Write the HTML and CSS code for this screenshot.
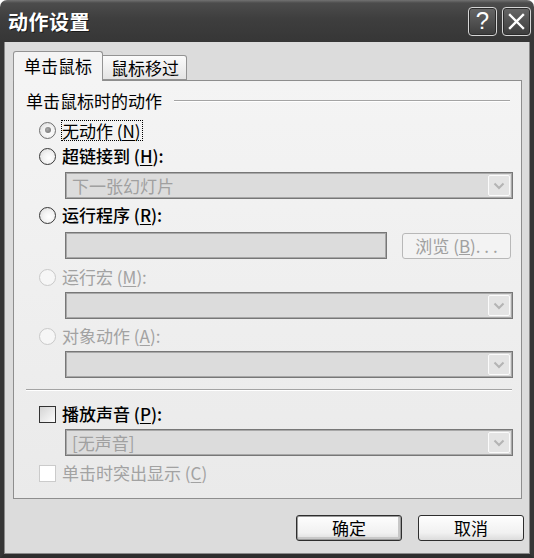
FILE: index.html
```html
<!DOCTYPE html>
<html lang="zh-CN">
<head>
<meta charset="utf-8">
<title>动作设置</title>
<link rel="stylesheet" href="styles.css">
</head>
<body>
<div class="window">
  <div class="titlebar">
    <span class="title">动作设置</span>
    <div class="tb-buttons">
      <span class="tb-btn tb-help">?</span>
      <span class="tb-btn"><svg width="17" height="17" viewBox="0 0 17 17"><path d="M2 2 L15 15 M15 2 L2 15" stroke="#fff" stroke-width="2.4" stroke-linecap="square"/></svg></span>
    </div>
  </div>
  <div class="client">
    <div class="tabs">
      <div class="tab active">单击鼠标</div>
      <div class="tab">鼠标移过</div>
    </div>
    <div class="panel">
      <div class="group-head"><span>单击鼠标时的动作</span><span class="rule"></span></div>

      <div class="opt r1"><span class="radio checked"></span><span class="lbl focus">无动作 (<u>N</u>)</span></div>
      <div class="opt r2"><span class="radio"></span><span class="lbl">超链接到 (<u>H</u>):</span></div>
      <div class="combo c1"><span class="combo-text">下一张幻灯片</span><span class="combo-btn"><svg width="12" height="8" viewBox="0 0 12 8"><path d="M1.5 1.5 L6 6 L10.5 1.5" fill="none" stroke="#b4b4b4" stroke-width="2"/></svg></span></div>

      <div class="opt r3"><span class="radio"></span><span class="lbl">运行程序 (<u>R</u>):</span></div>
      <div class="prog-row">
        <div class="textbox"></div>
        <div class="browse">浏览 (<u>B</u>). . .</div>
      </div>

      <div class="opt r4 disabled"><span class="radio"></span><span class="lbl">运行宏 (<u>M</u>):</span></div>
      <div class="combo c2"><span class="combo-text"></span><span class="combo-btn"><svg width="12" height="8" viewBox="0 0 12 8"><path d="M1.5 1.5 L6 6 L10.5 1.5" fill="none" stroke="#b4b4b4" stroke-width="2"/></svg></span></div>

      <div class="opt r5 disabled"><span class="radio"></span><span class="lbl">对象动作 (<u>A</u>):</span></div>
      <div class="combo c3"><span class="combo-text"></span><span class="combo-btn"><svg width="12" height="8" viewBox="0 0 12 8"><path d="M1.5 1.5 L6 6 L10.5 1.5" fill="none" stroke="#b4b4b4" stroke-width="2"/></svg></span></div>

      <div class="separator"></div>

      <div class="opt k1"><span class="check"></span><span class="lbl">播放声音 (<u>P</u>):</span></div>
      <div class="combo c4"><span class="combo-text">[无声音]</span><span class="combo-btn"><svg width="12" height="8" viewBox="0 0 12 8"><path d="M1.5 1.5 L6 6 L10.5 1.5" fill="none" stroke="#b4b4b4" stroke-width="2"/></svg></span></div>
      <div class="opt k2 disabled"><span class="check"></span><span class="lbl">单击时突出显示 (<u>C</u>)</span></div>
    </div>
    <div class="actions">
      <button class="btn default">确定</button>
      <button class="btn">取消</button>
    </div>
  </div>
</div>
</body>
</html>
```
FILE: styles.css
```css
html, body {
  margin: 0;
  padding: 0;
  background: #ffffff;
}
body {
  font-family: "Noto Sans CJK SC", "Noto Sans", sans-serif;
  font-size: 17px;
  color: #000;
}
.window {
  width: 534px;
  height: 558px;
  display: flex;
  flex-direction: column;
}
.titlebar {
  height: 42px;
  flex: none;
  box-sizing: border-box;
  display: flex;
  align-items: center;
  justify-content: space-between;
  padding: 0 3px 0 8px;
  border-radius: 7px 7px 0 0;
  background: linear-gradient(#727272 0, #4c4c4c 3px, #3e3e3e 45%, #363636 100%);
}
.title {
  color: #fff;
  font-weight: bold;
  font-size: 20px;
  letter-spacing: 0.5px;
  text-shadow: 1px 1px 0 #1a1a1a;
}
.tb-buttons {
  display: flex;
  gap: 5px;
}
.tb-btn {
  width: 29px;
  height: 29px;
  box-sizing: border-box;
  border: 1px solid #d6d6d6;
  border-radius: 4px;
  background: linear-gradient(#676767, #3d3d3d);
  box-shadow: inset 0 0 0 1px #2c2c2c;
  display: flex;
  align-items: center;
  justify-content: center;
  color: #fff;
}
.tb-help {
  font-family: "Liberation Sans", sans-serif;
  font-size: 24px;
  line-height: 1;
}
.client {
  flex: 1;
  background: #dcdcdc;
  border-left: 4px solid #363636;
  border-right: 4px solid #363636;
  border-bottom: 4px solid #2e2e2e;
  box-shadow: inset 1px 0 0 #8a8a8a, inset -1px 0 0 #8a8a8a, inset 0 -1px 0 #8a8a8a;
  padding: 9px 6px 0 9px;
  display: flex;
  flex-direction: column;
}
.tabs {
  display: flex;
  align-items: flex-end;
  height: 30px;
  position: relative;
  z-index: 2;
}
.tab {
  box-sizing: border-box;
  height: 25px;
  margin-bottom: 1px;
  padding: 0 7px 0 8px;
  border: 1px solid #939393;
  border-left: none;
  border-radius: 0 3px 0 0;
  background: linear-gradient(#fbfbfb, #e4e4e4);
  line-height: 23px;
}
.tab.active {
  height: 30px;
  margin-bottom: 0;
  padding: 0 10px;
  border-left: 1px solid #939393;
  border-bottom: none;
  border-radius: 3px 3px 0 0;
  background: #f4f4f4;
  line-height: 28px;
}
.panel {
  margin-top: -1px;
  margin-right: 2px;
  border: 1px solid #8e8e8e;
  background: linear-gradient(#f4f4f4, #eaeaea);
  padding: 0 0 14px 0;
  display: flex;
  flex-direction: column;
}
.group-head {
  display: flex;
  align-items: center;
  margin: 11px 11px 0 12px;
  height: 18px;
  line-height: 18px;
}
.group-head .rule {
  flex: 1;
  margin-left: 12px;
  border-top: 1px solid #a4a4a4;
  border-bottom: 1px solid #ffffff;
}
.opt {
  display: flex;
  align-items: center;
  height: 22px;
  margin-left: 25px;
  line-height: 22px;
}
.opt .lbl {
  margin-left: 6px;
  font-weight: 500;
}
.opt.disabled .lbl {
  color: #a2a2a2;
  font-weight: 400;
}
.opt u {
  text-decoration-thickness: 1px;
  text-underline-offset: 2px;
}
.lbl.focus {
  outline: 1px dotted #000;
  outline-offset: -1px;
  padding: 0 2px 0 1px;
  margin-left: 5px;
  line-height: 21px;
  font-weight: 400;
}
.radio {
  width: 17px;
  height: 17px;
  box-sizing: border-box;
  border-radius: 50%;
  border: 1.5px solid #383838;
  background: radial-gradient(circle at 60% 60%, #ffffff 0, #f2f2f2 45%, #d6d6d6 100%);
  position: relative;
  flex: none;
}
.radio.checked {
  border: 1px solid #6e6e6e;
}
.radio.checked::after {
  content: "";
  position: absolute;
  left: 4.5px;
  top: 4.5px;
  width: 6px;
  height: 6px;
  border-radius: 50%;
  background: radial-gradient(circle at 40% 40%, #a8a8a8, #6f6f6f);
}
.disabled .radio {
  border: 1px solid #c9c9c9;
  background: #f6f6f6;
}
.check {
  width: 17px;
  height: 17px;
  box-sizing: border-box;
  border: 1px solid #333;
  background: linear-gradient(135deg, #d4d4d4, #fdfdfd);
  flex: none;
}
.disabled .check {
  border-color: #cbcbcb;
  background: #ffffff;
}
.r1 { margin-top: 9px; }
.r2 { margin-top: 4px; }
.c1 { margin-top: 5px; }
.r3 { margin-top: 5px; }
.prog-row { margin-top: 6px; }
.r4 { margin-top: 7px; }
.c2 { margin-top: 4px; }
.r5 { margin-top: 6px; }
.c3 { margin-top: 4px; }
.k1 { margin-top: 12px; }
.c4 { margin-top: 4px; height: 28px; }
.k2 { margin-top: 6px; }
.combo {
  box-sizing: border-box;
  height: 27px;
  margin-left: 51px;
  margin-right: 8px;
  border: 1px solid #777777;
  box-shadow: inset 0 0 0 1px #a8a8a8;
  background: #dcdcdc;
  display: flex;
  align-items: center;
  justify-content: space-between;
  padding: 0 2px 0 6px;
}
.combo-text {
  color: #a0a0a0;
  line-height: 22px;
}
.combo-btn {
  width: 22px;
  height: 21px;
  box-sizing: border-box;
  border: 1px solid #fbfbfb;
  border-radius: 2px;
  background: #e4e4e4;
  display: flex;
  align-items: center;
  justify-content: center;
}
.prog-row {
  display: flex;
  align-items: center;
  margin-left: 51px;
  margin-right: 10px;
}
.textbox {
  width: 322px;
  height: 27px;
  box-sizing: border-box;
  border: 1px solid #777777;
  box-shadow: inset 0 0 0 1px #a8a8a8;
  background: #dcdcdc;
}
.browse {
  margin-left: 15px;
  flex: 1;
  height: 26px;
  box-sizing: border-box;
  border: 1px solid #b8b8b8;
  border-radius: 3px;
  background: #f3f3f3;
  color: #a0a0a0;
  display: flex;
  align-items: center;
  justify-content: center;
}
.separator {
  margin: 11px 9px 0 12px;
  border-top: 1px solid #a4a4a4;
  border-bottom: 1px solid #ffffff;
}
.actions {
  display: flex;
  justify-content: flex-end;
  gap: 16px;
  margin-top: 16px;
}
.btn {
  width: 106px;
  height: 26px;
  box-sizing: border-box;
  border: 1px solid #2e2e2e;
  border-radius: 3px;
  background: linear-gradient(#fefefe, #f1f1f1 70%, #dcdcdc);
  font-family: "Noto Sans CJK SC", sans-serif;
  font-size: 17px;
  color: #000;
  padding: 0;
  line-height: 22px;
}
.btn.default {
  box-shadow: inset 0 0 0 1px #9a9a9a, inset -1px -1px 0 2px #c8c8c8;
}
```
